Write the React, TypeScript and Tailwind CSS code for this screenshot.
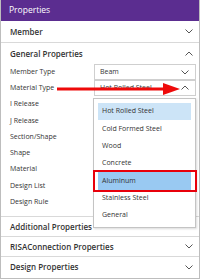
import React from 'react';

const font = "font-['Open_Sans','Liberation_Sans',sans-serif]";

function Chevron({ up = false }: { up?: boolean }) {
  return (
    <svg width="8" height="5" viewBox="0 0 8 5" className="shrink-0">
      <polyline
        points={up ? '0.5,4.5 4,1 7.5,4.5' : '0.5,0.5 4,4 7.5,0.5'}
        fill="none"
        stroke="#555"
        strokeWidth="1"
      />
    </svg>
  );
}

function Section({ title, up = false, className = '' }: { title: string; up?: boolean; className?: string }) {
  return (
    <div className={`flex items-center justify-between pl-[9px] pr-[6px] text-[8px] font-semibold text-[#333] ${className}`}>
      <span>{title}</span>
      <Chevron up={up} />
    </div>
  );
}

const labels = ['Member Type', 'Material Type', 'I Release', 'J Release', 'Section/Shape', 'Shape', 'Material', 'Design List', 'Design Rule'];
const materials = ['Hot Rolled Steel', 'Cold Formed Steel', 'Wood', 'Concrete', 'Aluminum', 'Stainless Steel', 'General'];

export default function App() {
  return (
    <div className={`relative w-[200px] h-[279px] overflow-hidden bg-white border-x border-b border-[#bdbdbd] ${font}`}>
      <div className="h-[21px] bg-[#5b2d90] text-white text-[8.5px] flex items-center pl-[8px]">Properties</div>
      <Section title="Member" className="h-[22px] border-b border-[#d9d9d9]" />
      <Section title="General Properties" up className="h-[21px]" />

      <div className="pb-[6px] border-b border-[#d9d9d9]">
        {labels.map((l, i) => (
          <div key={l} className="h-[16.25px] flex items-center text-[7px] text-[#333]">
            <div className="w-[93px] pl-[9px] shrink-0">{l}</div>
            {i === 0 && (
              <div className="h-[17px] w-[102px] border border-[#cfcfcf] flex items-center justify-between pl-[5px] pr-[6px]">
                <span>Beam</span>
                <Chevron />
              </div>
            )}
            {i === 1 && (
              <div className="h-[17px] w-[102px] -mt-px border border-[#cfcfcf] flex items-center justify-between pl-[5px] pr-[6px]">
                <span>Hot Rolled Steel</span>
                <Chevron up />
              </div>
            )}
          </div>
        ))}
      </div>

      <Section title="Additional Properties" className="h-[20px] border-b border-[#d9d9d9]" />
      <Section title="RISAConnection Properties" className="h-[20px] border-b border-[#d9d9d9]" />
      <Section title="Design Properties" className="h-[20px]" />

      {/* open dropdown list */}
      <div className="absolute left-[92px] top-[98px] w-[103px] h-[130px] bg-white border border-[#c4c4c4] shadow-[1px_1px_2px_rgba(0,0,0,0.15)] px-[4px] pt-[4px]">
        {materials.map((m, i) => (
          <div
            key={m}
            className={`h-[17.33px] flex items-center pl-[4px] text-[7px] text-[#333] ${i === 0 ? 'bg-[#cce4f7]' : ''} ${i === 4 ? 'bg-[#99c9f2]' : ''}`}
          >
            {m}
          </div>
        ))}
      </div>

      {/* highlight around Aluminum */}
      <div className="absolute left-[92px] top-[170px] w-[104px] h-[22px] border-2 border-[#e8000b]" />

      {/* annotation arrow */}
      <svg className="absolute left-[56px] top-[82px]" width="124" height="14" viewBox="0 0 124 14">
        <rect x="0" y="5.5" width="108" height="3" fill="#ee0a0a" />
        <polygon points="106,1 123,7 106,13" fill="#ee0a0a" />
      </svg>
    </div>
  );
}
